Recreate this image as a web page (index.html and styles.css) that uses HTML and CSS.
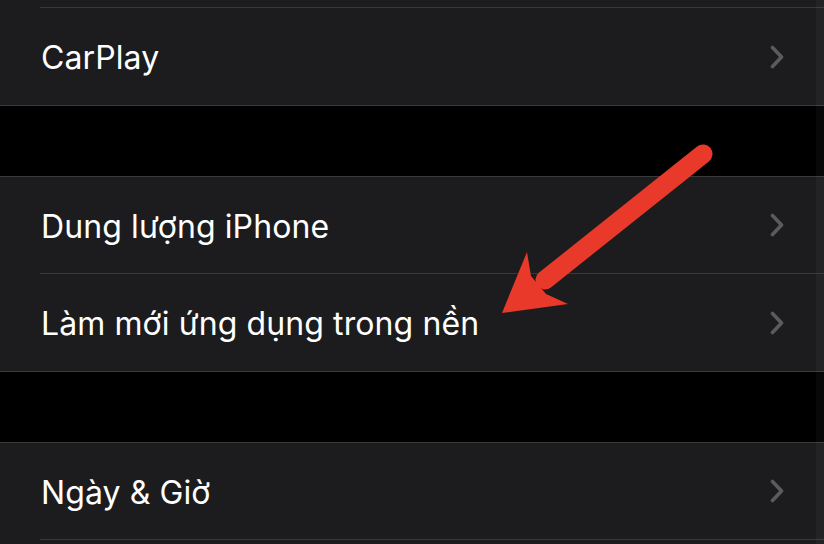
FILE: index.html
```html
<!DOCTYPE html>
<html lang="vi">
<head>
<meta charset="utf-8">
<link rel="stylesheet" href="styles.css">
</head>
<body>
<div class="screen">
  <div class="group">
    <div class="row partial"></div>
    <div class="row tall last">
      <span class="label">CarPlay</span>
      <svg class="chev" width="14" height="24" viewBox="0 0 14 24"><path d="M2.5 2.5 L11.5 12 L2.5 21.5"/></svg>
    </div>
  </div>
  <div class="gap"></div>
  <div class="group">
    <div class="row">
      <span class="label">Dung lượng iPhone</span>
      <svg class="chev" width="14" height="24" viewBox="0 0 14 24"><path d="M2.5 2.5 L11.5 12 L2.5 21.5"/></svg>
    </div>
    <div class="row tall last">
      <span class="label">Làm mới ứng dụng trong nền</span>
      <svg class="chev" width="14" height="24" viewBox="0 0 14 24"><path d="M2.5 2.5 L11.5 12 L2.5 21.5"/></svg>
    </div>
  </div>
  <div class="gap"></div>
  <div class="group">
    <div class="row">
      <span class="label">Ngày &amp; Giờ</span>
      <svg class="chev" width="14" height="24" viewBox="0 0 14 24"><path d="M2.5 2.5 L11.5 12 L2.5 21.5"/></svg>
    </div>
    <div class="row"></div>
  </div>
  <div class="scroll-strip"></div>
  <svg class="arrow" width="824" height="544" viewBox="0 0 824 544">
    <line x1="703" y1="154" x2="545" y2="280" stroke="#e9392b" stroke-width="19" stroke-linecap="round"/>
    <polygon points="502,313 527,252 531,276 546,294 568,304" fill="#e9392b"/>
  </svg>
</div>
</body>
</html>
```

FILE: styles.css
```css
html, body {
  margin: 0;
  padding: 0;
  background: #000;
}
.screen {
  position: relative;
  width: 824px;
  height: 544px;
  overflow: hidden;
  background: #000;
  display: flex;
  flex-direction: column;
  font-family: Inter, "Noto Sans", "Liberation Sans", sans-serif;
}
.group {
  display: flex;
  flex-direction: column;
  background: #1c1c1e;
  border-top: 1px solid #3a3a3c;
  border-bottom: 1px solid #3a3a3c;
  flex-shrink: 0;
}
.group:first-child {
  border-top: none;
}
.row {
  position: relative;
  height: 96px;
  flex-shrink: 0;
  display: flex;
  align-items: center;
  justify-content: space-between;
  padding: 0 40px 0 41px;
}
.row.tall {
  height: 97px;
}
.row.partial {
  height: 7px;
}
.row::after {
  content: "";
  position: absolute;
  left: 40px;
  right: 0;
  bottom: -1px;
  height: 1px;
  background: #38383a;
}
.row:not(.last) {
  margin-bottom: 1px;
}
.row.last::after {
  display: none;
}
.label {
  color: #fff;
  font-size: 32px;
  letter-spacing: 0.1px;
  white-space: nowrap;
  padding-top: 2px;
}
.chev path {
  fill: none;
  stroke: #5b5b5f;
  stroke-width: 3.6;
  stroke-linecap: round;
  stroke-linejoin: round;
}
.gap {
  height: 70px;
  flex-shrink: 0;
}
.scroll-strip {
  position: absolute;
  top: 0;
  right: 0;
  width: 8px;
  height: 100%;
  background: rgba(255, 255, 255, 0.03);
}
.arrow {
  position: absolute;
  left: 0;
  top: 0;
}
```
